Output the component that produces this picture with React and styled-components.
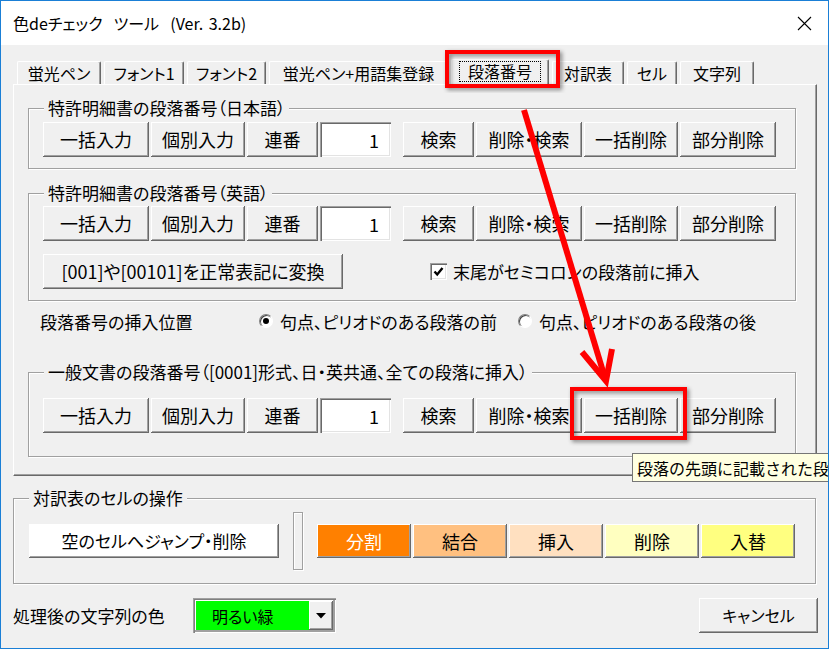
import React from 'react'
import styled, { createGlobalStyle } from 'styled-components'

const FONT = `"Noto Sans CJK JP", "Noto Sans", sans-serif`

const GlobalStyle = createGlobalStyle`
  html, body { margin: 0; padding: 0; background: #fff; }
  * { box-sizing: border-box; }
  body {
    font-family: ${FONT};
    font-feature-settings: "palt";
    color: #000;
  }
`

const Window = styled.div`
  position: relative;
  width: 829px;
  height: 649px;
  border: 1px solid #1a7fd6;
  background: #f0f0f0;
  overflow: hidden;
  display: flex;
  flex-direction: column;
`

const TitleBar = styled.div`
  height: 44px;
  flex-shrink: 0;
  background: #fff;
  display: flex;
  align-items: center;
  justify-content: space-between;
  padding: 0 16px 0 12px;
  font-size: 16px;
  white-space: pre;
  word-spacing: 2px;
`

const Body = styled.div`
  flex: 1;
  display: flex;
  flex-direction: column;
  padding: 14px 10px 0 12px;
`

const TabStrip = styled.div`
  display: flex;
  align-items: flex-end;
  gap: 3px;
  height: 25px;
  padding-left: 4px;
`

const Tab = styled.div`
  position: relative;
  z-index: ${p => (p.$active ? 2 : 0)};
  width: ${p => p.$w}px;
  height: ${p => (p.$active ? 26 : 23)}px;
  margin-bottom: ${p => (p.$active ? -1 : 0)}px;
  background: #f0f0f0;
  border-top: 1px solid #fff;
  border-left: 1px solid #fff;
  border-right: 1px solid #696969;
  box-shadow: inset -1px 0 0 #a0a0a0;
  border-radius: 2px 2px 0 0;
  font-size: 16px;
  display: flex;
  align-items: center;
  justify-content: center;
  padding-bottom: ${p => (p.$active ? 3 : 0)}px;
`

const Focus = styled.span`
  border: 1px dotted #000;
  padding: 0 8px;
  line-height: 19px;
`

const Panel = styled.div`
  margin-right: 1px;
  border-top: 1px solid #fff;
  border-left: 1px solid #fff;
  border-right: 1px solid #696969;
  border-bottom: 1px solid #696969;
  box-shadow: inset -1px -1px 0 #a0a0a0;
  padding: 23px 20px 18px 14px;
  display: flex;
  flex-direction: column;
`

const Group = styled.div`
  position: relative;
  border: 1px solid #a0a0a0;
  box-shadow: inset 1px 1px 0 #fff, 1px 1px 0 #fff;
  margin-top: ${p => p.$mt || 0}px;
  padding: ${p => p.$pt}px 0 ${p => p.$pb}px ${p => p.$pl || 14}px;
  display: flex;
  flex-direction: column;
  gap: 13px;
`

const GroupLabel = styled.span`
  position: absolute;
  top: -12px;
  left: 15px;
  padding: 0 4px;
  background: #f0f0f0;
  font-size: 17px;
  line-height: 22px;
  white-space: nowrap;
`

const Row = styled.div`
  display: flex;
  align-items: center;
  gap: 2px;
`

const Btn = styled.div`
  width: ${p => p.$w}px;
  height: ${p => p.$h || 35}px;
  margin-left: ${p => p.$ml || 0}px;
  flex-shrink: 0;
  background: ${p => p.$bg || '#f0f0f0'};
  color: ${p => p.$fg || '#000'};
  box-shadow: inset -1px -1px 0 #696969, inset 1px 1px 0 #fff,
    inset -2px -2px 0 #a0a0a0;
  font-size: ${p => p.$fs || 18}px;
  display: flex;
  align-items: center;
  justify-content: center;
  white-space: nowrap;
  padding-bottom: 1px;
`

const NumInput = styled.div`
  width: 71px;
  height: 35px;
  flex-shrink: 0;
  background: #fff;
  box-shadow: inset 1px 1px 0 #a0a0a0, inset 2px 2px 0 #696969,
    inset -1px -1px 0 #fff, inset -2px -2px 0 #e3e3e3;
  font-size: 18px;
  display: flex;
  align-items: center;
  justify-content: flex-end;
  padding-right: 12px;
`

const CheckWrap = styled.label`
  display: flex;
  align-items: center;
  gap: 6px;
  margin-left: 85px;
  font-size: 17px;
`

const CheckBox = styled.span`
  width: 17px;
  height: 17px;
  background: #fff;
  box-shadow: inset 1px 1px 0 #a0a0a0, inset 2px 2px 0 #696969,
    inset -1px -1px 0 #fff, inset -2px -2px 0 #e3e3e3;
  display: flex;
  align-items: center;
  justify-content: center;
`

const RadioRow = styled.div`
  display: flex;
  align-items: center;
  height: 20px;
  margin-top: 10px;
  padding-left: 12px;
  font-size: 17px;
`

const RadioTitle = styled.span`
  width: 219px;
`

const RadioOption = styled.span`
  width: ${p => p.$w}px;
  display: flex;
  align-items: center;
  gap: 7px;
  white-space: nowrap;
`

const RadioDot = styled.span`
  width: 14px;
  height: 14px;
  border-radius: 50%;
  background: #fff;
  border: 1px solid;
  border-color: #808080 #fff #fff #808080;
  box-shadow: inset 1px 1px 0 #404040;
  display: flex;
  align-items: center;
  justify-content: center;
  &::after {
    content: '';
    width: 6px;
    height: 6px;
    border-radius: 50%;
    background: ${p => (p.$on ? '#000' : 'transparent')};
  }
`

const CellGroup = styled(Group)`
  margin-top: 22px;
  margin-right: 2px;
  flex-direction: row;
  align-items: center;
  gap: 0;
  padding: 13px 0 13px 15px;
`

const Splitter = styled.span`
  width: 10px;
  height: 58px;
  margin: 0 14px;
  border: 1px solid #a0a0a0;
  box-shadow: inset 1px 1px 0 #fff, 1px 1px 0 #fff;
`

const BottomRow = styled.div`
  display: flex;
  align-items: center;
  margin-top: 14px;
  height: 35px;
`

const ColorLabel = styled.span`
  width: 180px;
  font-size: 17px;
`

const Combo = styled.div`
  width: 143px;
  height: 35px;
  display: flex;
  padding: 3px;
  background: #fff;
  box-shadow: inset 1px 1px 0 #a0a0a0, inset 2px 2px 0 #808080,
    inset -1px -1px 0 #fff, inset -3px -3px 0 #a0a0a0;
`

const ComboValue = styled.span`
  flex: 1;
  background: #00ff00;
  font-size: 16px;
  padding-left: 16px;
  display: flex;
  align-items: center;
`

const DropBtn = styled.span`
  width: 24px;
  background: #f0f0f0;
  box-shadow: inset -1px -1px 0 #696969, inset 1px 1px 0 #fff,
    inset -2px -2px 0 #a0a0a0;
  display: flex;
  align-items: center;
  justify-content: center;
`

const CancelBtn = styled(Btn)`
  margin-left: auto;
`

const Overlay = styled.div`
  position: absolute;
  top: -1px;
  left: -1px;
  width: 829px;
  height: 649px;
  pointer-events: none;
  z-index: 10;
`

const Tooltip = styled.div`
  position: absolute;
  left: 632px;
  top: 453px;
  height: 29px;
  border: 1px solid #767676;
  background: #ffffe1;
  font-size: 16px;
  padding: 0 4px;
  display: flex;
  align-items: center;
  white-space: nowrap;
  font-feature-settings: normal;
`

const tabs = [
  { label: '蛍光ペン', w: 84 },
  { label: 'フォント1', w: 80 },
  { label: 'フォント2', w: 79 },
  { label: '蛍光ペン+用語集登録', w: 179 },
  { label: '段落番号', w: 98, active: true },
  { label: '対訳表', w: 72 },
  { label: 'セル', w: 50 },
  { label: '文字列', w: 74 },
]

const cellButtons = [
  { label: '分割', bg: '#ff8000', fg: '#fff' },
  { label: '結合', bg: '#ffc080' },
  { label: '挿入', bg: '#ffe0c0' },
  { label: '削除', bg: '#ffffc0' },
  { label: '入替', bg: '#ffff80' },
]

const NumberRow = () => (
  <Row>
    <Btn $w={106}>一括入力</Btn>
    <Btn $w={94}>個別入力</Btn>
    <Btn $w={71}>連番</Btn>
    <NumInput>1</NumInput>
    <Btn $w={71} $ml={10}>検索</Btn>
    <Btn $w={106}>削除・検索</Btn>
    <Btn $w={94}>一括削除</Btn>
    <Btn $w={96}>部分削除</Btn>
  </Row>
)

const App = () => (
  <>
    <GlobalStyle />
    <Window>
      <TitleBar>
        <span>色deチェック  ツール  (Ver. 3.2b)</span>
        <svg width="15" height="15" viewBox="0 0 15 15">
          <path d="M1 1 L14 14 M14 1 L1 14" stroke="#000" strokeWidth="1.1" fill="none" />
        </svg>
      </TitleBar>
      <Body>
        <TabStrip>
          {tabs.map(t => (
            <Tab key={t.label} $w={t.w} $active={t.active}>
              {t.active ? <Focus>{t.label}</Focus> : t.label}
            </Tab>
          ))}
        </TabStrip>
        <Panel>
          <Group $pt={13} $pb={11}>
            <GroupLabel>特許明細書の段落番号（日本語）</GroupLabel>
            <NumberRow />
          </Group>
          <Group $mt={24} $pt={12} $pb={11}>
            <GroupLabel>特許明細書の段落番号（英語）</GroupLabel>
            <NumberRow />
            <Row>
              <Btn $w={300}>[001]や[00101]を正常表記に変換</Btn>
              <CheckWrap>
                <CheckBox>
                  <svg width="11" height="11" viewBox="0 0 11 11">
                    <path d="M1.5 5.5 L4.2 8.5 L9.5 2" stroke="#000" strokeWidth="2.4" fill="none" />
                  </svg>
                </CheckBox>
                末尾がセミコロンの段落前に挿入
              </CheckWrap>
            </Row>
          </Group>
          <RadioRow>
            <RadioTitle>段落番号の挿入位置</RadioTitle>
            <RadioOption $w={259}>
              <RadioDot $on />
              句点、ピリオドのある段落の前
            </RadioOption>
            <RadioOption $w={240}>
              <RadioDot />
              句点、ピリオドのある段落の後
            </RadioOption>
          </RadioRow>
          <Group $mt={41} $pt={25} $pb={23}>
            <GroupLabel>一般文書の段落番号（[0001]形式、日・英共通、全ての段落に挿入）</GroupLabel>
            <NumberRow />
          </Group>
        </Panel>
        <CellGroup $pt={13} $pb={13}>
          <GroupLabel>対訳表のセルの操作</GroupLabel>
          <Btn $w={250} $h={34} $bg="#ffffff" $fs={17}>空のセルへジャンプ・削除</Btn>
          <Splitter />
          <Row>
            {cellButtons.map(b => (
              <Btn key={b.label} $w={94} $h={34} $bg={b.bg} $fg={b.fg}>
                {b.label}
              </Btn>
            ))}
          </Row>
        </CellGroup>
        <BottomRow>
          <ColorLabel>処理後の文字列の色</ColorLabel>
          <Combo>
            <ComboValue>明るい緑</ComboValue>
            <DropBtn>
              <svg width="10" height="6" viewBox="0 0 10 6">
                <path d="M0 0 H10 L5 5.5 Z" fill="#000" />
              </svg>
            </DropBtn>
          </Combo>
          <CancelBtn $w={119} $fs={16}>キャンセル</CancelBtn>
        </BottomRow>
      </Body>
      <Overlay>
        <svg width="829" height="649" viewBox="0 0 829 649">
          <defs>
            <filter id="shadow" x="-20%" y="-20%" width="140%" height="140%">
              <feDropShadow dx="2" dy="2" stdDeviation="2" floodColor="#000" floodOpacity="0.45" />
            </filter>
          </defs>
          <rect x="447" y="52" width="111" height="34" fill="none" stroke="#ff0000" strokeWidth="4" filter="url(#shadow)" />
          <rect x="572" y="389" width="113" height="49" fill="none" stroke="#ff0000" strokeWidth="4" filter="url(#shadow)" />
          <line x1="524" y1="110" x2="605" y2="378" stroke="#ff0000" strokeWidth="6" />
          <polyline points="582,352 606,381 612,349" fill="none" stroke="#ff0000" strokeWidth="6" strokeLinejoin="miter" />
        </svg>
        <Tooltip>段落の先頭に記載された段落番号を一括削除します</Tooltip>
      </Overlay>
    </Window>
  </>
)

export default App
